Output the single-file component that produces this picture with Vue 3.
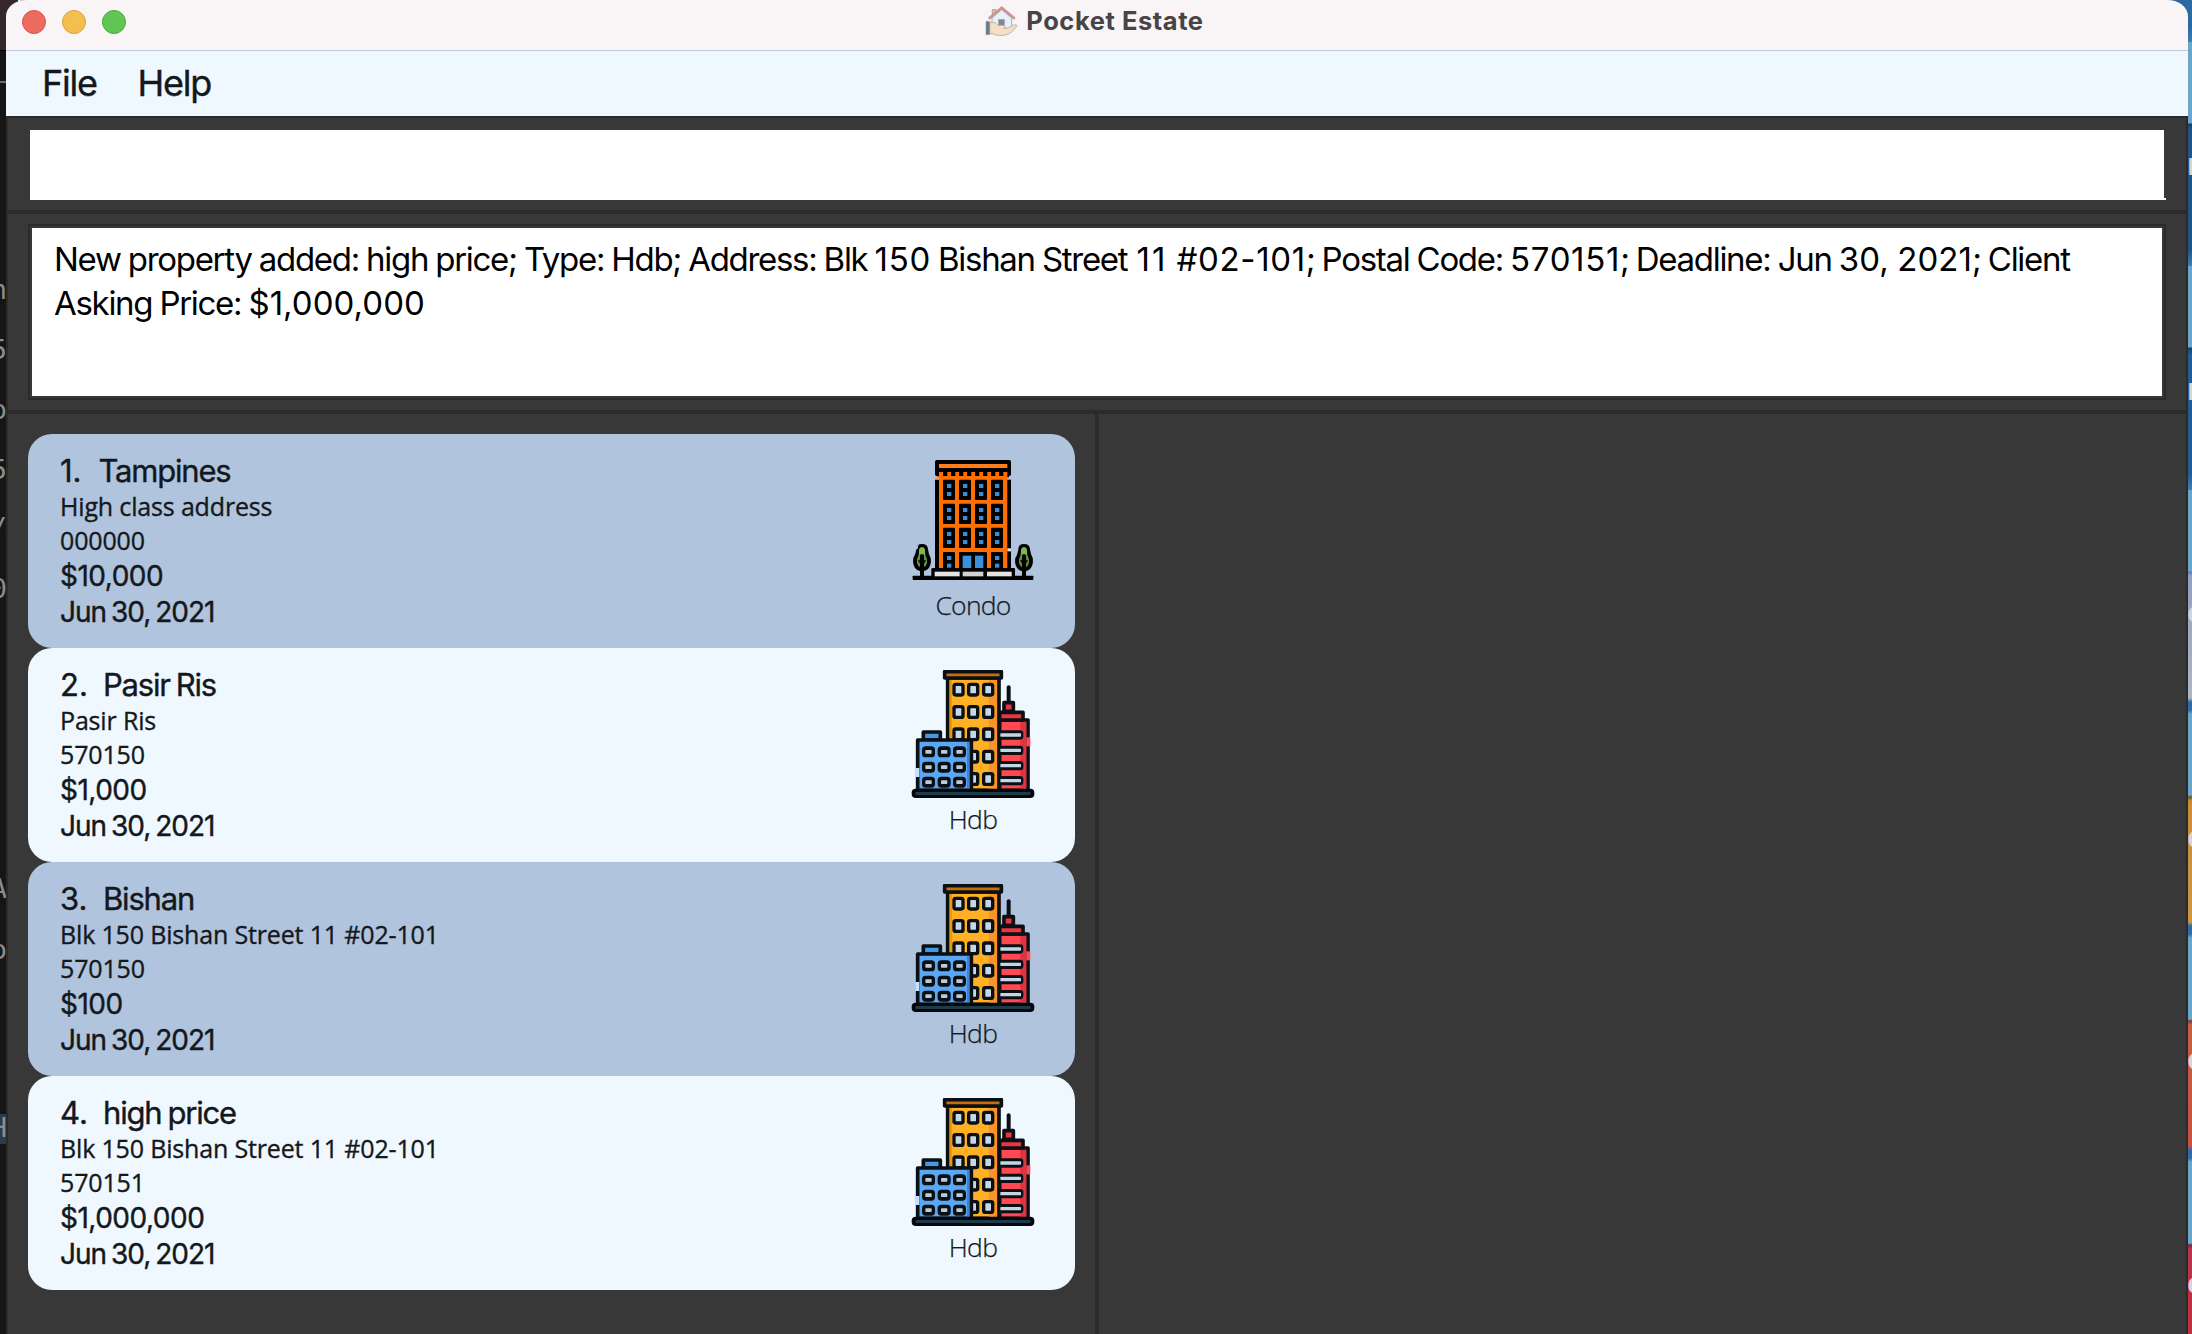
<script setup>
const properties = [
  { name: 'Tampines', address: 'High class address', postal: '000000', price: '$10,000', date: 'Jun 30, 2021', type: 'Condo' },
  { name: 'Pasir Ris', address: 'Pasir Ris', postal: '570150', price: '$1,000', date: 'Jun 30, 2021', type: 'Hdb' },
  { name: 'Bishan', address: 'Blk 150 Bishan Street 11 #02-101', postal: '570150', price: '$100', date: 'Jun 30, 2021', type: 'Hdb' },
  { name: 'high price', address: 'Blk 150 Bishan Street 11 #02-101', postal: '570151', price: '$1,000,000', date: 'Jun 30, 2021', type: 'Hdb' },
]
const behindGlyphs = [
  { c: 'n', y: 290 }, { c: '5', y: 350 }, { c: 'o', y: 410 }, { c: '5', y: 470 }, { c: '/', y: 528 },
  { c: '0', y: 589 }, { c: 'A', y: 889 }, { c: 'o', y: 950 }, { c: 'H', y: 1128 },
]
const wallGlyphs = [
  { c: 'r', y: 168 }, { c: 'n', y: 393 }, { c: 'e', y: 616 }, { c: 'o', y: 841 }, { c: 'o', y: 1063 }, { c: 'e', y: 1287 },
]
const condoWindows = []
for (const y of [119, 191, 263]) for (const x of [129, 177, 225, 273]) condoWindows.push({ x, y })
const towerWindows = []
for (const y of [98, 165, 232, 299, 366]) for (const x of [157, 201, 246]) towerWindows.push({ x, y })
const blockWindows = []
for (const y of [289, 335, 380]) for (const x of [66, 113, 159]) blockWindows.push({ x, y })
</script>

<template>
  <div class="desktop">
    <div class="left-edge">
      <span v-for="g in behindGlyphs" :key="g.y" class="glyph" :style="{ top: g.y - 20 + 'px' }">{{ g.c }}</span>
    </div>

    <main class="window">
      <header class="titlebar">
        <div class="lights"><i class="red"></i><i class="yellow"></i><i class="green"></i></div>
        <div class="caption">
          <svg class="app-icon" viewBox="76 14 100 92" width="33.3" height="30.7">
            <path d="M98 42V25h11v10" fill="#e8c5a5" stroke="#a89a90" stroke-width="3" />
            <path d="M97 50 126 25l30 25v33H97z" fill="#e9eff8" stroke="#a9afb9" stroke-width="3" />
            <path d="M90 50 126 19l37 31" fill="none" stroke="#b0a09f" stroke-width="8" stroke-linejoin="round" stroke-linecap="round" />
            <path d="M90 50 126 19l37 31" fill="none" stroke="#e58a86" stroke-width="3.5" stroke-linejoin="round" stroke-linecap="round" />
            <rect x="117" y="55" width="17" height="24" fill="#7c8797" stroke="#929aa6" stroke-width="2" />
            <path d="M90 65c10-4 18-1 24 7h18c6 0 6 8 0 9 10 1 17-2 26-8 8-5 15-2 14 0-8 12-17 22-30 27-15 4-33 3-44-3l-8-1z" fill="#f5dfc6" stroke="#b5a79a" stroke-width="2.5" />
            <path d="M79 60h11v40H79z" fill="#6c7786" stroke="#98a0aa" stroke-width="2" />
          </svg>
          <span>Pocket Estate</span>
        </div>
      </header>
      <nav class="menubar"><span class="m-file">File</span><span class="m-help">Help</span></nav>

      <section class="command"><div class="field"></div></section>
      <section class="result">
        <div class="display"><p>New property added: high price; Type: Hdb; Address: Blk <b>150</b> Bishan Street <b class="street-no">11</b> <b>#02-101</b>; Postal Code: <b>570151</b>; Deadline: Jun <em>30, 2021</em>; Client<br />Asking Price: <em>$1,000,000</em></p></div>
      </section>

      <section class="split">
        <div class="list">
          <article v-for="(p, i) in properties" :key="i" class="card" :class="{ odd: i % 2 === 0 }">
            <div class="info">
              <div class="name"><span class="idx" :class="{ one: i === 0 }">{{ i + 1 }}.</span><span>{{ p.name }}</span></div>
              <div class="addr">{{ p.address }}</div>
              <div class="postal">{{ p.postal }}</div>
              <div class="price">{{ p.price }}</div>
              <div class="date">{{ p.date }}</div>
            </div>
            <div class="kind">
              <svg v-if="p.type === 'Condo'" viewBox="27 48 384 384" width="128" height="128">
                <rect x="105" y="60" width="228" height="48" rx="5" />
                <rect x="105" y="119" width="228" height="268" />
                <rect x="111" y="100" width="216" height="12" />
                <rect x="117" y="94" width="205" height="292" fill="#ff6f00" />
                <rect x="105" y="109" width="12" height="9" fill="#ff9a56" />
                <rect x="322" y="325" width="11" height="9" fill="#dfe6f2" />
                <rect x="117" y="72" width="205" height="12" fill="#ff7d1c" />
                <rect x="117" y="84" width="205" height="12" />
                <rect v-for="n in 8" :key="'t' + n" :x="105 + n * 24" y="92" width="13" height="16" />
                <g v-for="w in condoWindows" :key="w.x + '-' + w.y">
                  <rect :x="w.x" :y="w.y" width="36" height="61" rx="3" />
                  <rect :x="w.x + 12" :y="w.y + 13" width="13" height="12" fill="#3990dc" />
                  <rect :x="w.x + 12" :y="w.y + 37" width="13" height="12" fill="#3990dc" />
                </g>
                <g v-for="x in [129, 273]" :key="x">
                  <rect :x="x" y="336" width="36" height="52" rx="3" />
                  <rect :x="x + 12" y="348" width="13" height="12" fill="#3990dc" />
                  <rect :x="x + 12" y="371" width="13" height="12" fill="#3990dc" />
                </g>
                <rect x="177" y="336" width="84" height="52" rx="3" />
                <rect x="188" y="347" width="26" height="37" fill="#3990dc" />
                <rect x="225" y="347" width="25" height="37" fill="#3990dc" />
                <rect x="94" y="384" width="251" height="34" rx="4" />
                <rect x="38" y="407" width="362" height="13" rx="2" />
                <rect x="104" y="395" width="75" height="14" fill="#e4e2e2" />
                <rect x="188" y="395" width="62" height="14" fill="#d2d0d4" />
                <rect x="261" y="395" width="74" height="14" fill="#e4e2e2" />
                <g v-for="x in [66, 372]" :key="'tree' + x" :transform="`translate(${x} 0)`">
                  <path d="M-17 328Q-17 312 0 312T18 328Q20 344 26 354C30 378 18 394 0 394S-30 378-26 354Q-19 344-17 328Z" />
                  <path d="M-8 329Q-7 322 0 322T9 329L10 344Q17 357 15 368Q12 382 0 383Q-12 382-15 368Q-17 357-10 344Z" fill="#5f913f" />
                  <path d="M-9 329Q-7 322 0 322T9 329V345H-9Z" fill="#7db653" />
                  <rect x="-6" y="343" width="12" height="67" rx="4" />
                  <path d="M-10 360-2 374M10 360 2 374" stroke="#000" stroke-width="4" />
                </g>
                <path d="M40 332 56 312 53 326z" fill="#b0c4de" />
              </svg>
              <svg v-else viewBox="27 60 384 384" width="128" height="128">
                <g stroke="#0b1014" stroke-width="11" stroke-linejoin="round">
                  <path d="M326 112V160" stroke-width="12" stroke-linecap="round" />
                  <path d="M299 210H384V421H299z" fill="#ff4852" />
                  <path d="M299 187H369V210H299z" fill="#e83642" />
                  <path d="M312 158H340V184H312z" fill="#e83642" />
                  <path d="M143 84H297V421H143z" fill="#ffb025" />
                  <path d="M134 65H304V84H134z" fill="#c96c0e" />
                </g>
                <rect x="361" y="216" width="18" height="202" fill="#de3341" />
                <rect x="379" y="262" width="12" height="27" fill="#f84b58" />
                <rect x="266" y="90" width="25" height="328" fill="#fb932b" />
                <rect x="149" y="90" width="7" height="180" fill="#e9980f" />
                <g v-for="y in [255, 301, 347, 392]" :key="y">
                  <rect x="295" :y="y - 14" width="75" height="28" rx="10" fill="#0b1014" />
                  <rect x="301" :y="y - 5" width="62" height="10" rx="2" fill="#c6d5e5" />
                </g>
                <g v-for="w in towerWindows" :key="w.x + '-' + w.y">
                  <rect :x="w.x" :y="w.y" width="37" height="42" rx="10" fill="#0b1014" />
                  <rect :x="w.x + 10" :y="w.y + 10" width="17" height="22" rx="2" fill="#c6d7e9" />
                </g>
                <g stroke="#0b1014" stroke-width="11" stroke-linejoin="round">
                  <path d="M70 246H121V270H70z" fill="#4897e6" />
                  <path d="M53 270H214V421H53z" fill="#5aa7f5" />
                </g>
                <rect x="201" y="276" width="7" height="143" fill="#4380cf" />
                <rect x="46" y="354" width="12" height="27" fill="#c5e1fc" />
                <g v-for="w in blockWindows" :key="'b' + w.x + '-' + w.y">
                  <rect :x="w.x" :y="w.y" width="39" height="33" rx="11" fill="#0b1014" />
                  <rect :x="w.x + 10" :y="w.y + 11" width="19" height="11" rx="2" fill="#b9cada" />
                </g>
                <rect x="35" y="416" width="368" height="28" rx="12" fill="#05080a" />
                <rect x="46" y="426" width="346" height="9" rx="4" fill="#1d3c4b" />
              </svg>
              <span class="label">{{ p.type }}</span>
            </div>
          </article>
        </div>
        <div class="detail"></div>
      </section>
    </main>

    <div class="right-edge">
      <span v-for="g in wallGlyphs" :key="g.y" class="wall" :style="{ top: g.y - 24 + 'px' }">{{ g.c }}</span>
    </div>
  </div>
</template>

<style>
body { margin: 0; overflow: hidden; }
</style>

<style scoped>
.desktop { width: 2192px; height: 1334px; display: flex; overflow: hidden; font-family: Inter, "Liberation Sans", sans-serif; color: #15181b; }
.left-edge { position: relative; width: 18px; margin-right: -12px; flex: none; background: linear-gradient(#33272c 0 50px, #000 50px 51px, #151515 51px); }
.left-edge::after { content: ""; position: absolute; left: 0; top: 1114px; width: 6px; height: 30px; background: #2c3a4e; }
.left-edge::before { content: ""; position: absolute; left: 0; top: 81px; width: 6px; height: 2px; background: #6a6a6a; }
.glyph { position: absolute; z-index: 1; right: 11px; font: 27px/40px "DejaVu Sans Mono", monospace; color: #8c8c8c; }
.window { position: relative; z-index: 2; width: 2182px; flex: none; display: flex; flex-direction: column; background: #383838; border-radius: 20px 20px 0 0 / 16px 16px 0 0; overflow: hidden; }
.right-edge { position: relative; width: 24px; margin-left: -20px; flex: none; overflow: hidden; background: linear-gradient(#2a69a4 0 28px, #3c82b0 42px, #6ba6ca 42px 123px, #143f6c 124px, #205388 130px 250px, #3c82b0 266px, #6ba6ca 266px 347px, #143f6c 348px, #245b93 355px 474px, #3c82b0 490px, #6ba6ca 490px 571px, #5f7aa0 572px, #929fc0 576px, #b0b4bf 698px, #2b6ca4 702px 710px, #6ba6ca 714px 795px, #6b542d 797px, #c98d37 801px, #cb9645 922px, #2b6ca4 926px 934px, #6ba6ca 938px 1019px, #713f36 1021px, #c75f42 1025px, #c65043 1146px, #2b6ca4 1150px 1158px, #6ba6ca 1162px 1243px, #722c3d 1245px, #b6344c 1249px, #c12d3d); }
.wall { position: absolute; left: 19px; font: bold 30px/40px "Noto Sans", sans-serif; color: #d5d5d5; }

.titlebar { position: relative; height: 50px; flex: none; background: #f9f4f5; border-bottom: 1px solid #c0ccd9; }
.lights { position: absolute; left: 16px; top: 10px; display: flex; gap: 16px; }
.lights i { box-sizing: border-box; width: 24px; height: 24px; border-radius: 50%; border: 1px solid; }
.lights .red { background: #ed6a5e; border-color: #d8544a; }
.lights .yellow { background: #f5bf4f; border-color: #d9a13c; }
.lights .green { background: #61c554; border-color: #4ba73f; }
.caption { display: flex; align-items: center; padding: 5px 0 0 979px; height: 32px; }
.caption span { margin-left: 8px; margin-top: -1px; font-size: 25.5px; font-weight: 700; line-height: 32px; letter-spacing: 0.55px; color: #464446; white-space: nowrap; }
.menubar { height: 65px; flex: none; background: #f0f8ff; display: flex; padding-left: 36px; box-sizing: border-box; font-size: 36px; line-height: 64px; }
.menubar span { -webkit-text-stroke: 0.4px; letter-spacing: -1.2px; }
.m-file { width: 95.5px; }

.command { height: 94px; flex: none; box-sizing: border-box; border: solid #2b2b2b; border-width: 2px 2px 0; padding: 12px 22px 0; }
.field { position: relative; height: 70px; background: #fff; width: 2134px; }
.field::after { content: ""; position: absolute; right: -2px; bottom: 0; width: 2px; height: 2px; background: #fff; }
.result { height: 204px; flex: none; box-sizing: border-box; border: solid #2b2b2b; border-width: 4px 2px; padding: 10px 20px 0; }
.display { box-sizing: border-box; height: 176px; width: 2138px; border: 2px solid #2b2b2b; padding: 2px; background: #fff content-box; }
.display p { margin: 0; padding: 9px 0 0 22px; font-size: 33px; line-height: 44px; letter-spacing: -1.3px; word-spacing: -0.8px; color: #000; white-space: nowrap; }
.display b { font-weight: inherit; letter-spacing: 0.65px; }
.display .street-no { letter-spacing: 2px; margin: 0 2px 0 2px; }
.display em { font-style: normal; letter-spacing: 0.05px; }

.split { flex: 1; display: flex; border: solid #2b2b2b; border-width: 0 2px; }
.list { width: 1047px; padding: 20px 20px 0; border-right: 4px solid #2b2b2b; flex: none; }
.detail { flex: 1; }
.card { height: 214px; box-sizing: border-box; border-radius: 24px; background: #f0f8ff; display: flex; justify-content: space-between; padding: 19px 38px 0 32px; }
.odd { background: #b0c4de; }
.info { white-space: nowrap; }
.name { display: flex; font-size: 31px; line-height: 36px; letter-spacing: -1.2px; word-spacing: -1.5px; -webkit-text-stroke: 0.4px; }
.idx { width: 43px; letter-spacing: 0; }
.idx.one { width: 38.5px; }
.addr, .postal { font-family: "Open Sans", "Noto Sans", sans-serif; font-size: 25px; line-height: 34px; letter-spacing: -0.16px; -webkit-text-stroke: 0.35px; }
.price, .date { font-size: 28px; line-height: 36px; -webkit-text-stroke: 0.4px; }
.price { letter-spacing: -0.5px; padding-top: 1px; }
.date { letter-spacing: -1px; word-spacing: -2px; }
.kind { width: 128px; padding-top: 3px; display: flex; flex-direction: column; align-items: center; }
.kind svg { display: block; flex: none; }
.label { font-family: "Open Sans", "Noto Sans", sans-serif; font-weight: 300; font-size: 26.5px; line-height: 36px; margin-top: 3px; letter-spacing: -0.75px; -webkit-text-stroke: 0.25px; }
</style>
